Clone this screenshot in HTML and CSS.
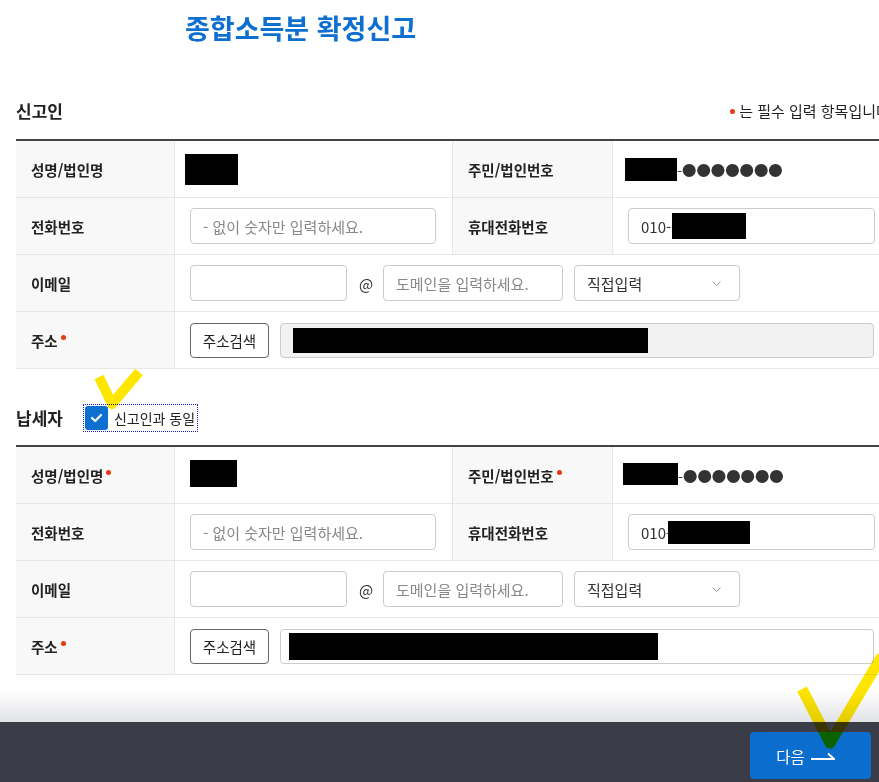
FILE: index.html
```html
<!DOCTYPE html>
<html lang="ko">
<head>
<meta charset="utf-8">
<title>종합소득분 확정신고</title>
<link rel="stylesheet" href="styles.css">
</head>
<body>
<div class="page">
  <div class="wrap">
    <h1 class="title">종합소득분 확정신고</h1>

    <div class="sec-head first">
      <h2 class="sec-title">신고인</h2>
      <p class="req-note"><span class="req-dot"></span>는 필수 입력 항목입니다.</p>
    </div>
    <div class="ftable">
      <div class="th">성명/법인명</div>
      <div class="td mid"><span class="rd rd-n1"></span></div>
      <div class="th">주민/법인번호</div>
      <div class="td"><span class="rd rd-r1"></span><span class="mask">-●●●●●●●</span></div>

      <div class="th">전화번호</div>
      <div class="td mid"><div class="field f-phone"><span class="ph">- 없이 숫자만 입력하세요.</span></div></div>
      <div class="th">휴대전화번호</div>
      <div class="td"><div class="field f-mobile"><span class="val">010-</span><span class="rd rd-m1"></span></div></div>

      <div class="th">이메일</div>
      <div class="td span3 gap">
        <div class="field f-email1"></div>
        <span class="at">@</span>
        <div class="field f-email2"><span class="ph">도메인을 입력하세요.</span></div>
        <div class="field f-select"><span class="val">직접입력</span>
          <svg class="chev" width="9" height="5" viewBox="0 0 9 5"><path d="M0.5 0.5 L4.5 4.5 L8.5 0.5" fill="none" stroke="#9a9a9a" stroke-width="1"/></svg>
        </div>
      </div>

      <div class="th">주소<span class="req-dot sup"></span></div>
      <div class="td span3 gap">
        <button class="addr-btn" type="button">주소검색</button>
        <div class="field f-addr ro"><span class="rd rd-a1"></span></div>
      </div>
    </div>

    <div class="sec-head second">
      <h2 class="sec-title">납세자</h2>
      <label class="same">
        <span class="cbox"><svg width="13" height="10" viewBox="0 0 13 10"><path d="M2 5 L5.2 8 L11 2" fill="none" stroke="#fff" stroke-width="2.2" stroke-linecap="round" stroke-linejoin="round"/></svg></span>
        <span class="same-text">신고인과 동일</span>
      </label>
    </div>
    <div class="ftable">
      <div class="th">성명/법인명<span class="req-dot sup"></span></div>
      <div class="td mid"><span class="rd rd-n2"></span></div>
      <div class="th">주민/법인번호<span class="req-dot sup"></span></div>
      <div class="td"><span class="rd rd-r2"></span><span class="mask">-●●●●●●●</span></div>

      <div class="th">전화번호</div>
      <div class="td mid"><div class="field f-phone"><span class="ph">- 없이 숫자만 입력하세요.</span></div></div>
      <div class="th">휴대전화번호</div>
      <div class="td"><div class="field f-mobile"><span class="val">010-</span><span class="rd rd-m2"></span></div></div>

      <div class="th">이메일</div>
      <div class="td span3 gap">
        <div class="field f-email1"></div>
        <span class="at">@</span>
        <div class="field f-email2"><span class="ph">도메인을 입력하세요.</span></div>
        <div class="field f-select"><span class="val">직접입력</span>
          <svg class="chev" width="9" height="5" viewBox="0 0 9 5"><path d="M0.5 0.5 L4.5 4.5 L8.5 0.5" fill="none" stroke="#9a9a9a" stroke-width="1"/></svg>
        </div>
      </div>

      <div class="th">주소<span class="req-dot sup"></span></div>
      <div class="td span3 gap">
        <button class="addr-btn" type="button">주소검색</button>
        <div class="field f-addr"><span class="rd rd-a2"></span></div>
      </div>
    </div>
  </div>

  <div class="footer">
    <button class="next" type="button"><span>다음</span>
      <svg width="24" height="10" viewBox="0 0 24 10"><path d="M0 8 H23 L17 2.5" fill="none" stroke="#fff" stroke-width="2" stroke-linejoin="miter"/></svg>
    </button>
  </div>

  <svg class="annot" width="879" height="782" viewBox="0 0 879 782">
    <path d="M99 377 L112 404 L139 372" fill="none" stroke="#ffe600" stroke-width="10" stroke-linejoin="round"/>
    <path d="M802 689 L830 743 L882 656" fill="none" stroke="#ffe600" stroke-width="11" stroke-linejoin="round"/>
  </svg>
</div>
</body>
</html>
```

FILE: styles.css
```css
* { box-sizing: border-box; margin: 0; padding: 0; }
html, body { background: #fff; }
body {
  font-family: "Noto Sans CJK KR", "Noto Sans", sans-serif;
  color: #222;
}
.page {
  position: relative;
  width: 100%;
  height: 782px;
  overflow: hidden;
}
.wrap {
  width: 876px;
  margin-left: 16px;
}
.title {
  margin: 12px 0 0 169px;
  font-size: 27px;
  line-height: 32px;
  font-weight: 700;
  color: #0d6fcf;
  letter-spacing: 0;
}
.sec-head {
  display: flex;
  align-items: center;
  justify-content: space-between;
  height: 26px;
}
.sec-head.first { margin-top: 54px; margin-bottom: 15px; }
.sec-head.second { margin-top: 36px; margin-bottom: 14px; justify-content: flex-start; }
.sec-title {
  font-size: 17px;
  line-height: 26px;
  font-weight: 700;
  color: #222;
}
.req-note {
  display: flex;
  align-items: center;
  font-size: 15px;
  line-height: 20px;
  color: #222;
  margin-right: -2px;
}
.req-dot {
  display: inline-block;
  width: 5px;
  height: 5px;
  border-radius: 50%;
  background: #e8380d;
  margin-right: 4px;
}
.req-dot.sup {
  margin: 0 0 6px 3px;
}
.ftable {
  display: grid;
  grid-template-columns: 159px 278px 160px 279px;
  border-top: 2px solid #444;
}
.th, .td {
  height: 57px;
  border-bottom: 1px solid #e6e6e6;
  display: flex;
  align-items: center;
}
.th {
  background: #f8f8f8;
  padding-left: 15px;
  font-size: 14.5px;
  font-weight: 700;
  border-right: 1px solid #e6e6e6;
}
.td { padding-left: 15px; }
.td.mid { border-right: 1px solid #e6e6e6; }
.td.span3 { grid-column: 2 / span 3; }
.td.gap { gap: 11px; }
.field {
  height: 36px;
  border: 1px solid #cccccc;
  border-radius: 4px;
  background: #fff;
  display: flex;
  align-items: center;
  padding: 0 12px;
  font-size: 15px;
  flex-shrink: 0;
}
.ph { color: #888; }
.val { color: #333; }
.f-phone { width: 246px; }
.f-mobile { width: 247px; }
.f-email1 { width: 157px; }
.f-email2 { width: 180px; }
.f-select { width: 166px; justify-content: space-between; padding-right: 18px; }
.f-addr { width: 594px; height: 35px; }
.f-addr.ro { background: #f2f2f2; }
.at { font-size: 15px; color: #333; width: 13px; text-align: center; margin-left: 1px; }
.addr-btn {
  width: 79px;
  height: 35px;
  border: 1px solid #666;
  border-radius: 4px;
  background: #fff;
  font-family: inherit;
  font-size: 14.5px;
  color: #222;
  flex-shrink: 0;
}
.rd { display: inline-block; background: #000; flex-shrink: 0; }
.rd-n1 { width: 53px; height: 31px; margin-left: -5px; }
.rd-n2 { width: 47px; height: 27px; margin-top: -3px; }
.rd-r1 { width: 52px; height: 23px; margin-left: -3px; }
.rd-r2 { width: 55px; height: 22px; margin-left: -5px; margin-top: -2px; }
.rd-m1 { width: 74px; height: 26px; margin-left: 1px; }
.rd-m2 { width: 82px; height: 23px; margin-left: -3px; }
.rd-a1 { width: 355px; height: 25px; }
.rd-a2 { width: 369px; height: 27px; margin-left: -4px; }
.mask {
  font-size: 14.4px;
  color: #333;
  letter-spacing: 0;
}
.same {
  display: flex;
  align-items: center;
  gap: 6px;
  margin-left: 21px;
  padding: 1px;
  outline: 1px dotted #1a1ad0;
  height: 26px;
}
.cbox {
  width: 23px;
  height: 24px;
  border-radius: 3px;
  background: #0d6fcf;
  display: flex;
  align-items: center;
  justify-content: center;
}
.same-text { font-size: 14px; color: #222; padding-right: 1px; }
.footer {
  position: relative;
  height: 60px;
  margin-top: 47px;
  background: #3a3c48;
  display: flex;
  justify-content: flex-end;
  padding: 10px 8px 0 0;
}
.footer::before {
  content: "";
  position: absolute;
  left: 0;
  right: 0;
  top: -32px;
  height: 32px;
  background: linear-gradient(to bottom, rgba(255,255,255,0), #e2e3e6);
}
.next {
  width: 121px;
  height: 47px;
  border: none;
  border-radius: 4px;
  background: #0b6ecf;
  color: #fff;
  font-family: inherit;
  font-size: 15.5px;
  display: flex;
  align-items: center;
  justify-content: center;
  gap: 6px;
  padding-right: 10px;
}
.annot {
  position: absolute;
  left: 0;
  top: 0;
  pointer-events: none;
  mix-blend-mode: multiply;
}
```
